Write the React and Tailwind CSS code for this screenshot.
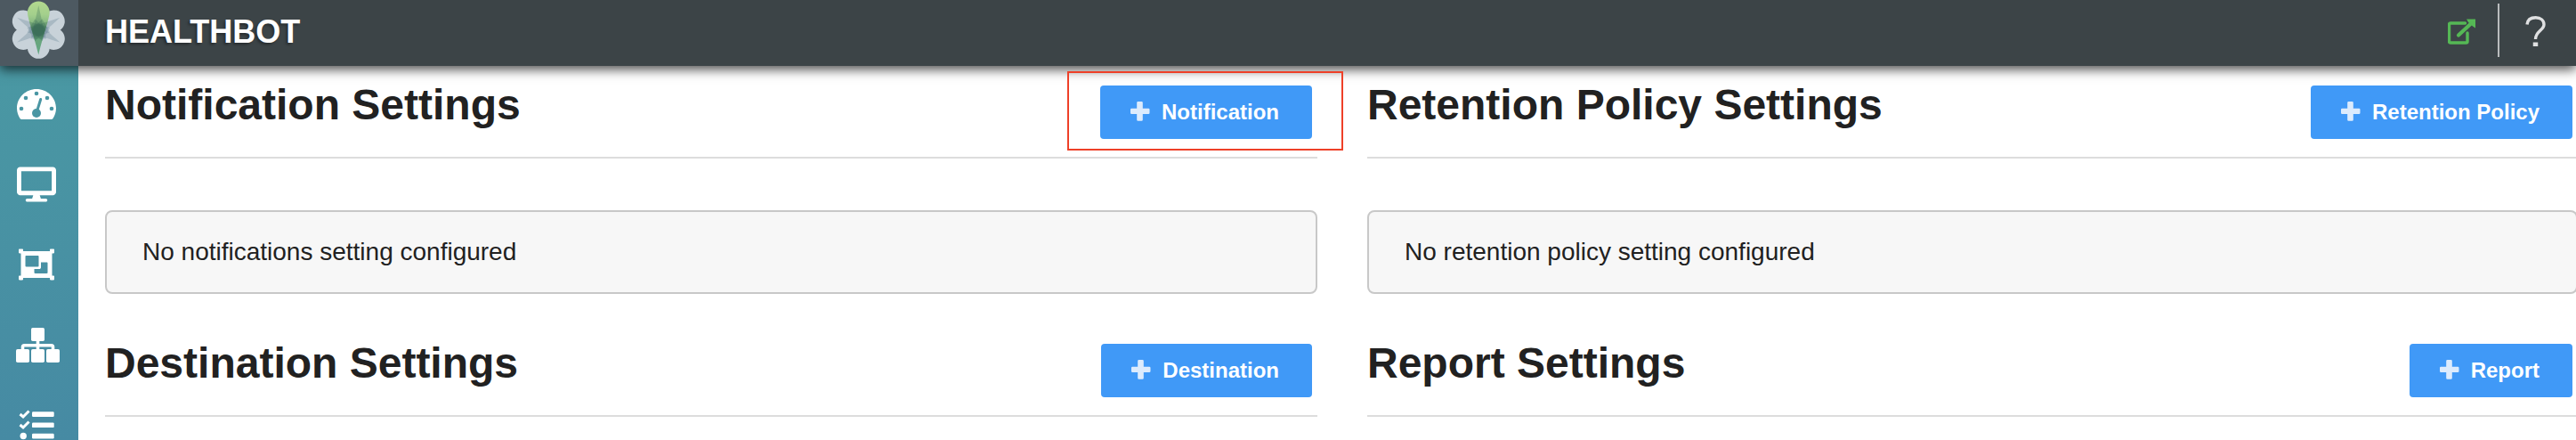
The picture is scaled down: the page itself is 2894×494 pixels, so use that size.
import { FaDesktop, FaObjectGroup } from "react-icons/fa";

const PETAL = "M30.900 14A12.400 12.400 0 0 1 55.700 14C55.700 20 50 34 43.300 61.500C36.600 34 30.900 20 30.900 14z";
const TAPER = "M34.500 24H52.100C49.500 32 46.500 47 43.300 61.500C40.100 47 37.100 32 34.500 24z";

function Logo() {
  const angles = [60, 120, 180, 240, 300];
  return (
    <svg className="h-[74px] w-[88px]" viewBox="0 0 88 74">
      <defs>
        <linearGradient id="leaf" x1="0" y1="0" x2="0" y2="1">
          <stop offset="0" stopColor="#b3d98e" />
          <stop offset="0.25" stopColor="#a3cf8c" />
          <stop offset="0.55" stopColor="#6da378" />
          <stop offset="1" stopColor="#62a884" />
        </linearGradient>
        <clipPath id="leaf-clip">
          <path d={PETAL} />
        </clipPath>
      </defs>
      {angles.map((a) => (
        <path key={a} transform={`rotate(${a} 43.3 33.7)`} d={PETAL} fill="#c8d2d9" />
      ))}
      {angles.map((a) => (
        <path key={a} transform={`rotate(${a} 43.3 33.7)`} d={TAPER} fill="#55758a" opacity="0.27" />
      ))}
      <path d={PETAL} fill="url(#leaf)" />
      <g clipPath="url(#leaf-clip)">
        {angles.map((a) => (
          <path key={a} transform={`rotate(${a} 43.3 33.7)`} d={TAPER} fill="#2f6552" opacity="0.27" />
        ))}
        <circle cx="43.300" cy="33.700" r="7.500" fill="#3f6e5a" opacity="0.4" />
      </g>
    </svg>
  );
}

function Gauge() {
  return (
    <svg className="h-9 w-11" viewBox="0 0 44 36">
      <path fill="#fff" d="M22 1C34 1 44 10.500 44 22.500c0 4.500-1.500 8.500-3.500 11.500-.6.900-1.300 1-2 1h-33c-.7 0-1.400-.1-2-1C1.500 31 0 27 0 22.500 0 10.500 10 1 22 1z" />
      <g fill="#4a96a3">
        <circle cx="5" cy="23" r="2.300" />
        <circle cx="10" cy="11" r="2.300" />
        <circle cx="22" cy="6" r="2.300" />
        <circle cx="34" cy="11" r="2.300" />
        <circle cx="39" cy="23" r="2.300" />
        <circle cx="22" cy="28" r="5" />
      </g>
      <path d="M22.500 26L26.700 12.500" stroke="#4a96a3" strokeWidth="3" strokeLinecap="round" />
    </svg>
  );
}

function Sitemap() {
  return (
    <svg className="h-[39px] w-[49px]" viewBox="0 0 49 39" fill="#fff">
      <rect x="17" y="0" width="15" height="15" rx="1.800" />
      <rect x="0" y="24" width="15" height="15" rx="1.800" />
      <rect x="17" y="24" width="15" height="15" rx="1.800" />
      <rect x="34" y="24" width="15" height="15" rx="1.800" />
      <path d="M24.500 14V25M7.500 25V21.500Q7.500 19.700 9.300 19.700H39.700Q41.500 19.700 41.500 21.500V25" fill="none" stroke="#fff" strokeWidth="3.600" />
    </svg>
  );
}

function Tasks() {
  return (
    <svg className="h-[36px] w-10" viewBox="0 0 40 36" fill="#fff">
      <rect x="15" y="2.300" width="24.700" height="5.700" rx="1.200" />
      <rect x="15" y="14.400" width="24.700" height="5.700" rx="1.200" />
      <rect x="15" y="26.700" width="24.700" height="5.700" rx="1.200" />
      <circle cx="5.200" cy="29.500" r="3.700" />
      <path d="M1.500 5L5 8L11.500 1.500M1.500 17L5 20L11.500 13.500" fill="none" stroke="#fff" strokeWidth="3" />
    </svg>
  );
}

function Plus() {
  return (
    <svg className="mb-0.5 size-[22px] shrink-0" viewBox="0 0 22 22" fill="#dcebfd">
      <path d="M8.500 0h4q1.300 0 1.300 1.300v6.400h6.400q1.300 0 1.300 1.300v3.700q0 1.300-1.300 1.300h-6.400v6.400q0 1.300-1.300 1.300h-4q-1.300 0-1.300-1.300v-6.400h-6q-1.200 0-1.200-1.300v-3.700q0-1.300 1.200-1.300h6v-6.400q0-1.300 1.300-1.300z" />
    </svg>
  );
}

function ExternalLink() {
  return (
    <svg className="mb-0.5 h-[30px] w-8" viewBox="0 0 32 30" fill="none" stroke="#55b855">
      <path d="M19.500 5H3A1.500 1.500 0 0 0 1.500 6.500V25.500A1.500 1.500 0 0 0 3 27H20.500A1.500 1.500 0 0 0 22 25.500V16" strokeWidth="3.400" strokeLinejoin="round" strokeLinecap="round" />
      <path d="M12 18.500L26 5.500" strokeWidth="4.200" strokeLinecap="round" />
      <path d="M21 0.500H31V10.500L28 8.500L23 4z" fill="#55b855" stroke="none" />
    </svg>
  );
}

function AddButton({ label }) {
  return (
    <button className="flex h-[60px] items-center rounded bg-[#4099f7] pl-[34px] pr-[37px] text-2xl font-bold text-white">
      <Plus />
      <span className="ml-[13px]">{label}</span>
    </button>
  );
}

function SectionHeader({ title, action }) {
  return (
    <div className="flex h-[104px] items-start justify-between border-b-2 border-[#dddddd] pr-1.5 pt-[22px]">
      <h2 className="-mt-1.5 text-5xl leading-[56px] font-bold">{title}</h2>
      <AddButton label={action} />
    </div>
  );
}

function Section({ title, action, message }) {
  return (
    <section className="h-[290px]">
      <SectionHeader title={title} action={action} />
      {message && (
        <div className="mt-[58px] flex h-[94px] items-center rounded-lg border-2 border-[#c8c8c8] bg-[#f7f7f7] pl-10 text-[28px]">
          {message}
        </div>
      )}
    </section>
  );
}

export default function App() {
  return (
    <div className="relative flex h-[494px] w-[2894px] flex-col overflow-hidden bg-white font-['Liberation_Sans',Arial,sans-serif] text-[#212121]">
      <header className="relative z-10 flex h-[74px] shrink-0 items-center bg-[#3c4447] shadow-[0_4px_12px_rgba(0,0,0,0.7)]">
        <div className="h-[74px] w-[88px] bg-[#4d5961]">
          <Logo />
        </div>
        <h1 className="ml-[30px] flex-1 pb-0.5 text-4xl leading-[44px] font-bold text-white [text-shadow:-2px_2px_3px_rgba(0,0,0,0.35)]">HEALTHBOT</h1>
        <ExternalLink />
        <div className="mb-1.5 ml-6 h-[60px] w-0.5 bg-[#b9bcbd]" />
        <svg className="ml-[29px] mb-1 h-9 w-6" viewBox="0 0 24 36" fill="none" stroke="#dfe0e1" strokeWidth="3.400">
          <path d="M2 10.500C2.500 5 6.500 2.700 11.700 2.700C17.500 2.700 21 6 21 10.500C21 17 11.500 18 11.500 27" />
          <path d="M11.500 30.500V35" strokeWidth="5.500" />
        </svg>
        <div className="w-[33px]" />
      </header>
      <div className="flex h-[420px]">
        <nav className="flex h-[420px] w-[88px] shrink-0 flex-col overflow-hidden bg-linear-to-b from-[#4a98a3] to-[#468aa3]">
          <div className="h-[87px] shrink-0 pl-[19px] pt-[25px]"><Gauge /></div>
          <div className="h-[92px] shrink-0 pl-[19px] pt-[24px] text-white"><FaDesktop className="size-11" /></div>
          <div className="h-[92px] shrink-0 pl-[21px] pt-[24px] text-white"><FaObjectGroup className="size-10" /></div>
          <div className="h-[92px] shrink-0 pl-[18px] pt-[23px]"><Sitemap /></div>
          <div className="shrink-0 pl-[21px] pt-[23px]"><Tasks /></div>
        </nav>
        <main className="grid flex-1 grid-cols-[1362px_1360px] gap-x-14 pl-[30px]">
          <Section title="Notification Settings" action="Notification" message="No notifications setting configured" />
          <Section title="Retention Policy Settings" action="Retention Policy" message="No retention policy setting configured" />
          <Section title="Destination Settings" action="Destination" />
          <Section title="Report Settings" action="Report" />
        </main>
      </div>
      <div className="absolute left-[1199px] top-[80px] z-20 h-[89px] w-[310px] border-2 border-[#ee4028]" />
    </div>
  );
}
